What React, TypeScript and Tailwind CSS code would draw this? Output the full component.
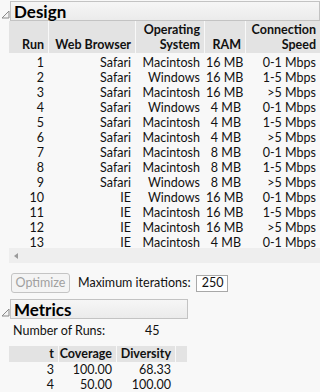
import React from "react";

const rows: [string, string, string, string, string][] = [
  ["1", "Safari", "Macintosh", "16 MB", "0-1 Mbps"],
  ["2", "Safari", "Windows", "16 MB", "1-5 Mbps"],
  ["3", "Safari", "Macintosh", "16 MB", ">5 Mbps"],
  ["4", "Safari", "Windows", "4 MB", "0-1 Mbps"],
  ["5", "Safari", "Macintosh", "4 MB", "1-5 Mbps"],
  ["6", "Safari", "Macintosh", "4 MB", ">5 Mbps"],
  ["7", "Safari", "Macintosh", "8 MB", "0-1 Mbps"],
  ["8", "Safari", "Macintosh", "8 MB", "1-5 Mbps"],
  ["9", "Safari", "Windows", "8 MB", ">5 Mbps"],
  ["10", "IE", "Windows", "16 MB", "0-1 Mbps"],
  ["11", "IE", "Macintosh", "16 MB", "1-5 Mbps"],
  ["12", "IE", "Macintosh", "16 MB", ">5 Mbps"],
  ["13", "IE", "Macintosh", "4 MB", "0-1 Mbps"],
];

function Tri() {
  return (
    <svg width="9" height="9" viewBox="0 0 9 9" className="shrink-0">
      <polygon points="8,1 8,8 1,8" fill="#f4f4f4" stroke="#8a8a8a" strokeWidth="1" />
    </svg>
  );
}

function Outline({ title, width }: { title: string; width: string }) {
  return (
    <div className="flex items-center h-[20px]">
      <div className="w-[10px] flex items-end justify-start pl-[1px] pt-[6px]">
        <Tri />
      </div>
      <div
        className={`${width} h-[20px] border border-[#c3c3c3] bg-gradient-to-b from-[#f6f6f6] to-[#ebebeb] flex items-center pl-[3px]`}
      >
        <span className="font-bold text-[17px] leading-none text-black">{title}</span>
      </div>
    </div>
  );
}

export default function App() {
  const cols = "grid grid-cols-[40px_86px_68px_40px_74px]";
  return (
    <div
      className="w-[320px] h-[392px] overflow-hidden bg-[#f8f8f8] text-[12.5px] text-[#111]"
      style={{ fontFamily: "Lato, 'Noto Sans', sans-serif" }}
    >
      <div className="pt-[1px]">
        <Outline title="Design" width="w-[311px]" />
      </div>
      <div className="pl-[9px]">
        <div className={`${cols} bg-[#e3e3e3] h-[32px] font-bold leading-[15px] gap-x-[1px] w-[308px]`}>
          {[
            ["", "Run"],
            ["", "Web Browser"],
            ["Operating", "System"],
            ["", "RAM"],
            ["Connection", "Speed"],
          ].map(([a, b], i) => (
            <div key={i} className="flex flex-col justify-end items-end pr-[4px] pb-[1px] bg-[#e3e3e3] border-r border-[#f8f8f8]">
              {a && <span>{a}</span>}
              <span>{b}</span>
            </div>
          ))}
        </div>
        <div className="pt-[2px]">
          {rows.map((r, i) => (
            <div key={i} className={`${cols} h-[15px] leading-[15px] gap-x-[1px]`}>
              {r.map((c, j) => (
                <div key={j} className="text-right pr-[5px] whitespace-nowrap">
                  {c}
                </div>
              ))}
            </div>
          ))}
        </div>
        <div className="h-[15px] mt-[-2px] bg-[#eeeeee] flex items-center pl-[5px]">
          <svg width="4" height="6" viewBox="0 0 4 6">
            <polygon points="4,0 4,6 0,3" fill="#9a9a9a" />
          </svg>
        </div>
      </div>
      <div className="flex items-center pl-[11px] mt-[10px] h-[20px]">
        <div className="w-[59px] h-[20px] border border-[#c4c4c4] rounded-[3px] bg-[#f4f4f4] text-[#a0a0a0] flex items-center justify-center">
          Optimize
        </div>
        <span className="ml-[8px]">Maximum iterations:</span>
        <div className="ml-[5px] w-[32px] h-[17px] border border-[#a8a8a8] bg-white flex items-center justify-end pr-[3px] leading-none">
          250
        </div>
      </div>
      <div className="mt-[6px]">
        <Outline title="Metrics" width="w-[178px]" />
      </div>
      <div className="pl-[13px] mt-[3px] h-[18px] flex items-center">
        <span className="w-[132px]">Number of Runs:</span>
        <span>45</span>
      </div>
      <div className="pl-[9px] mt-[6px]">
        <div className="grid grid-cols-[50px_58px_59px_10px] bg-[#e3e3e3] h-[16px] leading-[16px] font-bold w-[178px]">
          <div className="text-right pr-[4px] border-r border-[#f8f8f8]">t</div>
          <div className="text-right pr-[4px] border-r border-[#f8f8f8]">Coverage</div>
          <div className="text-right pr-[4px] border-r border-[#f8f8f8]">Diversity</div>
          <div></div>
        </div>
        {[
          ["3", "100.00", "68.33"],
          ["4", "50.00", "100.00"],
        ].map((r, i) => (
          <div key={i} className="grid grid-cols-[50px_58px_59px_10px] h-[15px] leading-[15px]">
            {r.map((c, j) => (
              <div key={j} className="text-right pr-[5px]">
                {c}
              </div>
            ))}
            <div></div>
          </div>
        ))}
      </div>
    </div>
  );
}
